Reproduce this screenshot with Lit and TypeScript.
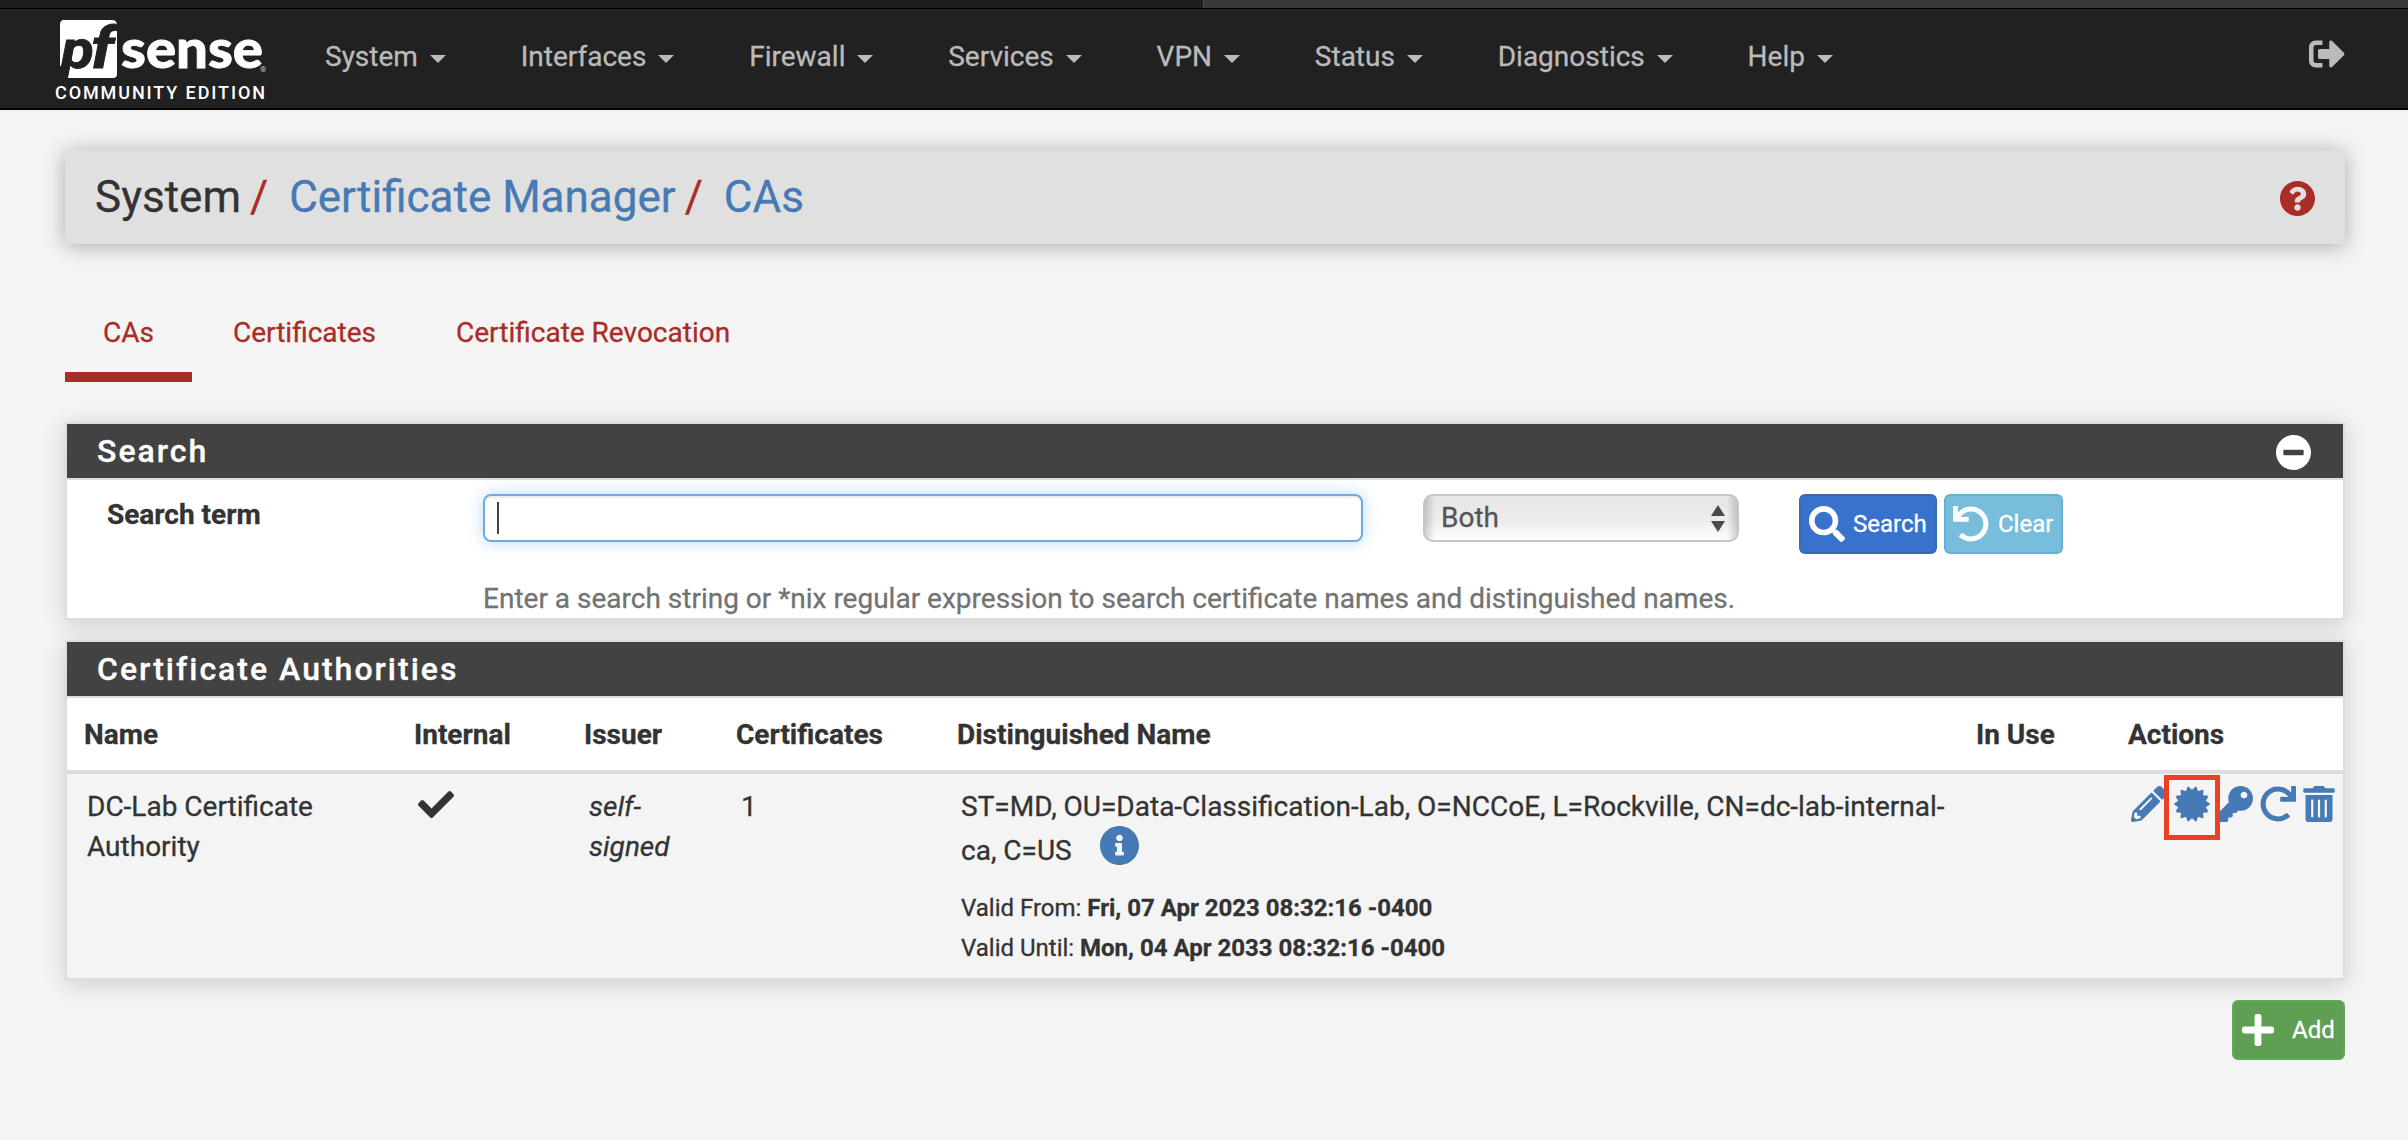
import { LitElement, html, css, svg } from "lit";
import { customElement, property } from "lit/decorators.js";

const ICONS: Record<string, { box: string; d: string }> = {
  signOut: {
    box: "0 0 512 512",
    d: "M497 273L329 441c-15 15-41 4.5-41-17v-96H152c-13.3 0-24-10.7-24-24v-96c0-13.3 10.7-24 24-24h136V88c0-21.4 25.9-32 41-17l168 168c9.3 9.4 9.3 24.6 0 34zM192 436v-40c0-6.6-5.4-12-12-12H96c-17.7 0-32-14.3-32-32V160c0-17.7 14.3-32 32-32h84c6.6 0 12-5.4 12-12V76c0-6.6-5.4-12-12-12H96c-53 0-96 43-96 96v192c0 53 43 96 96 96h84c6.6 0 12-5.4 12-12z",
  },
  question: {
    box: "8 8 496 496",
    d: "M504 256c0 136.997-111.043 248-248 248S8 392.997 8 256C8 119.083 119.043 8 256 8s248 111.083 248 248zM262.655 90c-54.497 0-89.255 22.957-116.549 63.758-3.536 5.286-2.353 12.415 2.715 16.258l34.699 26.31c5.205 3.947 12.621 3.008 16.665-2.122 17.864-22.658 30.113-35.797 57.303-35.797 20.429 0 45.698 13.148 45.698 32.958 0 14.976-12.363 22.667-32.534 33.976C247.128 238.528 216 254.941 216 296v4c0 6.627 5.373 12 12 12h56c6.627 0 12-5.373 12-12v-1.333c0-28.462 83.186-29.647 83.186-106.667 0-58.002-60.165-102-116.531-102zM256 338c-25.365 0-46 20.635-46 46 0 25.364 20.635 46 46 46s46-20.636 46-46c0-25.365-20.635-46-46-46z",
  },
  minus: {
    box: "8 8 496 496",
    d: "M256 8C119 8 8 119 8 256s111 248 248 248 248-111 248-248S393 8 256 8zM124 296c-6.6 0-12-5.4-12-12v-56c0-6.6 5.4-12 12-12h264c6.6 0 12 5.4 12 12v56c0 6.6-5.4 12-12 12H124z",
  },
  info: {
    box: "8 8 496 496",
    d: "M256 8C119.043 8 8 119.083 8 256c0 136.997 111.043 248 248 248s248-111.003 248-248C504 119.083 392.957 8 256 8zm0 110c23.196 0 42 18.804 42 42s-18.804 42-42 42-42-18.804-42-42 18.804-42 42-42zm56 254c0 6.627-5.373 12-12 12h-88c-6.627 0-12-5.373-12-12v-24c0-6.627 5.373-12 12-12h12v-64h-12c-6.627 0-12-5.373-12-12v-24c0-6.627 5.373-12 12-12h64c6.627 0 12 5.373 12 12v100h12c6.627 0 12 5.373 12 12v24z",
  },
  search: {
    box: "0 0 512 512",
    d: "M505 442.7L405.3 343c-4.5-4.5-10.6-7-17-7H372c27.6-35.3 44-79.7 44-128C416 93.1 322.9 0 208 0S0 93.1 0 208s93.1 208 208 208c48.3 0 92.7-16.4 128-44v16.3c0 6.4 2.5 12.5 7 17l99.7 99.7c9.4 9.4 24.6 9.4 33.9 0l28.3-28.3c9.4-9.4 9.4-24.6.1-34zM208 336c-70.7 0-128-57.2-128-128 0-70.7 57.2-128 128-128 70.7 0 128 57.2 128 128 0 70.7-57.2 128-128 128z",
  },
  plus: {
    box: "0 32 448 448",
    d: "M416 208H272V64c0-17.67-14.33-32-32-32h-32c-17.67 0-32 14.33-32 32v144H32c-17.67 0-32 14.33-32 32v32c0 17.67 14.33 32 32 32h144v144c0 17.67 14.33 32 32 32h32c17.67 0 32-14.33 32-32V304h144c17.67 0 32-14.33 32-32v-32c0-17.67-14.33-32-32-32z",
  },
  check: {
    box: "0 65 512 382",
    d: "M173.898 439.404l-166.4-166.4c-9.997-9.997-9.997-26.206 0-36.204l36.203-36.204c9.997-9.998 26.207-9.998 36.204 0L192 312.69 432.095 72.596c9.997-9.997 26.207-9.997 36.204 0l36.203 36.204c9.997 9.997 9.997 26.206 0 36.204l-294.4 294.401c-9.998 9.997-26.207 9.997-36.204-.001z",
  },
  redo: {
    box: "0 0 512 512",
    d: "M500.33 0h-47.41a12 12 0 0 0-12 12.57l4 82.76A247.42 247.42 0 0 0 256 8C119.34 8 7.9 119.53 8 256.19 8.1 393.07 119.1 504 256 504a247.1 247.1 0 0 0 166.18-63.91 12 12 0 0 0 .48-17.43l-34-34a12 12 0 0 0-16.38-.55A176 176 0 1 1 402.1 157.8l-101.53-4.87a12 12 0 0 0-12.57 12v47.41a12 12 0 0 0 12 12h200.33a12 12 0 0 0 12-12V12a12 12 0 0 0-12-12z",
  },
  pencil: {
    box: "0 0 512 512",
    d: "M497.9 142.1l-46.1 46.1c-4.7 4.7-12.3 4.7-17 0l-111-111c-4.7-4.7-4.7-12.3 0-17l46.1-46.1c18.7-18.7 49.1-18.7 67.9 0l60.1 60.1c18.8 18.7 18.8 49.1 0 67.9zM284.2 99.8L21.6 362.4.4 483.9c-2.9 16.4 11.4 30.6 27.8 27.8l121.5-21.3 262.6-262.6c4.7-4.7 4.7-12.3 0-17l-111-111c-4.8-4.7-12.4-4.7-17.1 0zM124.1 339.9c-5.5-5.5-5.5-14.3 0-19.8l154-154c5.5-5.5 14.3-5.5 19.8 0s5.5 14.3 0 19.8l-154 154c-5.5 5.5-14.3 5.5-19.8 0zM88 424h48v36.3l-64.5 11.3-31.1-31.1L51.7 376H88v48z",
  },
  key: {
    box: "0 0 512 512",
    d: "M512 176.001C512 273.203 433.202 352 336 352c-11.22 0-22.19-1.062-32.827-3.069l-24.012 27.014A23.999 23.999 0 0 1 261.223 384H224v40c0 13.255-10.745 24-24 24h-40v40c0 13.255-10.745 24-24 24H24c-13.255 0-24-10.745-24-24v-78.059c0-6.365 2.529-12.47 7.029-16.971l161.802-161.802C163.108 213.814 160 195.271 160 176 160 78.798 238.797.001 335.999 0 433.488-.001 512 78.511 512 176.001zM336 128c0 26.51 21.49 48 48 48s48-21.49 48-48-21.49-48-48-48-48 21.49-48 48z",
  },
  trash: {
    box: "0 0 448 512",
    d: "M32 464a48 48 0 0 0 48 48h288a48 48 0 0 0 48-48V128H32zm272-256a16 16 0 0 1 32 0v224a16 16 0 0 1-32 0zm-96 0a16 16 0 0 1 32 0v224a16 16 0 0 1-32 0zm-96 0a16 16 0 0 1 32 0v224a16 16 0 0 1-32 0zM432 32H312l-9.4-18.7A24 24 0 0 0 281.1 0H166.8a23.72 23.72 0 0 0-21.4 13.3L136 32H16A16 16 0 0 0 0 48v32a16 16 0 0 0 16 16h416a16 16 0 0 0 16-16V48a16 16 0 0 0-16-16z",
  },
  seal: { box: "-256 -256 512 512", d: sealPath(14, 244, 186) },
};

/* Spiked disc: tips on the outer radius, notches on the inner one. */
function sealPath(tips: number, outer: number, inner: number): string {
  const points: string[] = [];
  for (let i = 0; i < tips * 2; i++) {
    const r = i % 2 === 0 ? outer : inner;
    const a = (Math.PI * i) / tips;
    points.push(`${(r * Math.cos(a)).toFixed(1)} ${(r * Math.sin(a)).toFixed(1)}`);
  }
  return `M${points.join("L")}Z`;
}

@customElement("fa-icon")
class FaIcon extends LitElement {
  @property() name = "";

  static styles = css`
    :host {
      display: block;
      flex: none;
    }
    svg {
      display: block;
      width: 100%;
      height: 100%;
      fill: currentColor;
    }
    .rounded {
      stroke: currentColor;
      stroke-width: 22;
      stroke-linejoin: round;
    }
  `;

  render() {
    const icon = ICONS[this.name];
    if (!icon) return html``;
    return html`<svg viewBox=${icon.box}>
      ${svg`<path class=${this.name === "seal" ? "rounded" : ""} d=${icon.d}></path>`}
    </svg>`;
  }
}

@customElement("pf-logo")
class PfLogo extends LitElement {
  static styles = css`
    :host {
      display: block;
      flex: none;
      width: 214px;
      height: 82px;
      -webkit-text-stroke: 0;
    }
    svg {
      display: block;
      overflow: visible;
    }
    .mark {
      fill: #fff;
    }
    .pf {
      fill: #212121;
      stroke: #212121;
      stroke-width: 0.8;
      font: italic 700 53px Roboto, sans-serif;
    }
    .tall {
      font-size: 57px;
    }
    .sense {
      fill: #fff;
      stroke: #fff;
      stroke-width: 0.8;
      font: 900 53px Lato, sans-serif;
    }
    .reg {
      fill: #ccc;
      font: 8px Roboto, sans-serif;
    }
    .edition {
      fill: #fff;
      font: 500 18px Roboto, sans-serif;
    }
  `;

  render() {
    return html`<svg width="214" height="86" viewBox="0 0 214 86">
      <path class="mark" d="M10 4H58a5 5 0 0 1 4 4V58a4 4 0 0 1-4 4H11L14 52L5 50V8a4 4 0 0 1 5-4z"></path>
      <text class="pf" x="6" y="52" textLength="33" lengthAdjust="spacingAndGlyphs">p</text>
      <text class="pf tall" x="36" y="52" textLength="23" lengthAdjust="spacingAndGlyphs">f</text>
      <text class="sense" x="66" y="52" textLength="142" lengthAdjust="spacingAndGlyphs">sense</text>
      <text class="reg" x="205" y="56">®</text>
      <text class="edition" x="0" y="83" textLength="210">COMMUNITY EDITION</text>
    </svg>`;
  }
}

const MENU = ["System", "Interfaces", "Firewall", "Services", "VPN", "Status", "Diagnostics", "Help"];
const TABS = ["CAs", "Certificates", "Certificate Revocation"];
const HEADS = ["Name", "Internal", "Issuer", "Certificates", "Distinguished Name", "In Use", "Actions"];

@customElement("app-root")
class AppRoot extends LitElement {
  static styles = css`
    :host {
      display: block;
      box-sizing: border-box;
      height: 1140px;
      background: #f4f4f4;
      color: #333;
      font: 28px/40px Roboto, sans-serif;
      -webkit-text-stroke: 0.3px currentColor;
    }
    *,
    *::before {
      box-sizing: border-box;
    }
    .strip {
      display: grid;
      grid-template-columns: 1203px 1fr;
      height: 9px;
      border-bottom: 1px solid #000;
      background: #1e1e1e;
    }
    .strip-tab {
      grid-column: 2;
      background: #39393b;
      border-left: 1px solid #4d4d4f;
    }
    nav {
      display: flex;
      height: 101px;
      padding: 7px 63px 0 55px;
      background: #212121;
      border-bottom: 2px solid #000;
      color: #bbb;
    }
    .menu {
      display: flex;
      gap: 74.8px;
      padding: 21px 0 0 56px;
      height: 61px;
    }
    .menu-item {
      display: flex;
      align-items: center;
      gap: 12px;
    }
    .caret {
      border: 8px solid transparent;
      border-top-color: currentColor;
      border-bottom: 0;
      margin-top: 3px;
    }
    .logout {
      width: 36px;
      height: 36px;
      margin: 20px 0 0 auto;
    }
    main {
      padding: 40px 63px 0 65px;
    }
    .crumbs {
      display: flex;
      align-items: center;
      height: 94px;
      padding: 0 30px;
      background: #e0e0e0;
      box-shadow: 0 2px 20px rgba(0, 0, 0, 0.3);
      font-size: 44px;
    }
    .slash {
      color: #a92d26;
      margin: 0 21px 0 9px;
    }
    .link {
      color: #457ab4;
    }
    .help {
      width: 35px;
      height: 35px;
      margin: 2px 0 0 auto;
      color: #a92d26;
    }
    .tabs {
      display: flex;
      height: 138px;
      color: #a92d26;
    }
    .tab {
      padding: 69px 39px 0 41px;
    }
    .tab.on {
      padding: 69px 38px 0 38px;
      border-bottom: 10px solid #a92d26;
    }
    .panel {
      background: #fff;
      border: 2px solid #ddd;
      box-shadow: 0 4px 22px rgba(0, 0, 0, 0.16);
    }
    .search-panel {
      margin-top: 40px;
      height: 198px;
    }
    .table-panel {
      margin-top: 20px;
      height: 340px;
    }
    .panel-head {
      display: flex;
      align-items: center;
      justify-content: space-between;
      height: 56px;
      padding: 0 32px 1px 30px;
      border-bottom: 2px solid #ddd;
      background: #424242;
      color: #fff;
      font-size: 32px;
      font-weight: 500;
      letter-spacing: 2px;
    }
    .collapse {
      width: 35px;
      height: 35px;
      margin-top: 3px;
    }
    .form {
      display: grid;
      grid-template-columns: 376px 940px 376px 1fr;
      padding: 14px 0 0 40px;
    }
    .label {
      font-weight: 700;
      padding-top: 1px;
    }
    .input {
      width: 880px;
      height: 48px;
      padding: 8px 12px;
      border: 2px solid #72a9e3;
      border-radius: 8px;
      box-shadow: inset 0 2px 2px rgba(0, 0, 0, 0.08), 0 0 16px rgba(102, 175, 233, 0.45);
    }
    .text-cursor {
      width: 2px;
      height: 32px;
      margin-top: -2px;
      background: #444;
    }
    .select {
      display: flex;
      align-items: center;
      justify-content: space-between;
      width: 316px;
      height: 48px;
      padding: 0 12px 0 16px;
      border: 2px solid #c6c6c6;
      border-radius: 10px;
      background: linear-gradient(90deg, rgba(0, 0, 0, 0.16), transparent 10px, transparent calc(100% - 10px), rgba(0, 0, 0, 0.16)),
        linear-gradient(#e6e6e6, #ececec 55%, #fdfdfd);
      color: #555;
    }
    .arrows {
      display: grid;
      gap: 5px;
    }
    .up,
    .down {
      border: 7px solid transparent;
    }
    .up {
      border-top: 0;
      border-bottom: 11px solid #4a4a4a;
    }
    .down {
      border-bottom: 0;
      border-top: 11px solid #4a4a4a;
    }
    .buttons {
      display: flex;
      gap: 7px;
    }
    .btn {
      display: flex;
      align-items: center;
      height: 60px;
      border: 2px solid;
      border-radius: 6px;
      color: #fff;
      font-size: 24px;
    }
    .btn fa-icon {
      width: 36px;
      height: 36px;
    }
    .find {
      width: 138px;
      padding-left: 8px;
      gap: 8px;
      background: #3872cd;
      border-color: #3a6aaa;
    }
    .clear {
      width: 119px;
      padding-left: 7px;
      gap: 9px;
      background: #78bddc;
      border-color: #63b2d6;
    }
    .clear fa-icon {
      transform: scaleX(-1);
    }
    .hint {
      grid-column: 2 / 5;
      padding-top: 25px;
      color: #737373;
    }
    .row {
      display: grid;
      grid-template-columns: 330px 170px 152px 221px 1019px 152px 1fr;
    }
    .head {
      height: 76px;
      padding: 17px 0 0 17px;
      border-bottom: 4px solid #ddd;
      font-weight: 700;
    }
    .body {
      height: 204px;
      padding: 13px 0 0 20px;
      background: #f4f4f4;
    }
    .name {
      width: 240px;
    }
    .check {
      width: 36px;
      height: 27px;
      margin: 4px 0 0 1px;
    }
    .issuer {
      font-style: italic;
      width: 92px;
      padding-left: 2px;
    }
    .count {
      padding-left: 2px;
    }
    .dn {
      line-height: 44px;
      margin-top: -2px;
      width: 1000px;
      padding-left: 1px;
    }
    .dn-last {
      display: flex;
      gap: 28px;
    }
    .info {
      width: 39px;
      height: 39px;
      color: #457ab4;
      margin-top: -3px;
    }
    .dates {
      padding-top: 15px;
      font-size: 24px;
      line-height: 40px;
    }
    .actions {
      display: flex;
      color: #457ab4;
      gap: 7px;
      margin-top: -1px;
    }
    .actions fa-icon {
      width: 36px;
      height: 36px;
    }
    .actions .trash {
      width: 32px;
    }
    .marked {
      position: relative;
    }
    .marked::before {
      content: "";
      position: absolute;
      left: -10px;
      top: -11px;
      width: 56px;
      height: 65px;
      border: 5px solid #ec4025;
    }
    .footer {
      display: flex;
      justify-content: flex-end;
      padding-top: 20px;
    }
    .add {
      width: 113px;
      padding-left: 8px;
      gap: 18px;
      background: #5f9f53;
      border-color: #5caa55;
    }
    .add fa-icon {
      width: 32px;
      height: 32px;
    }
  `;

  render() {
    return html`
      <div class="strip"><div class="strip-tab"></div></div>
      <nav>
        <pf-logo></pf-logo>
        <div class="menu">
          ${MENU.map((m) => html`<span class="menu-item">${m}<i class="caret"></i></span>`)}
        </div>
        <fa-icon class="logout" name="signOut"></fa-icon>
      </nav>
      <main>
        <header class="crumbs">
          <span>System</span><span class="slash">/</span>
          <span class="link">Certificate Manager</span><span class="slash">/</span>
          <span class="link">CAs</span>
          <fa-icon class="help" name="question"></fa-icon>
        </header>
        <div class="tabs">
          ${TABS.map((t, i) => html`<span class="tab ${i === 0 ? "on" : ""}">${t}</span>`)}
        </div>
        <section class="panel search-panel">
          <div class="panel-head">Search<fa-icon class="collapse" name="minus"></fa-icon></div>
          <div class="form">
            <span class="label">Search term</span>
            <div class="input"><div class="text-cursor"></div></div>
            <div class="select">Both<span class="arrows"><i class="up"></i><i class="down"></i></span></div>
            <div class="buttons">
              <span class="btn find"><fa-icon name="search"></fa-icon>Search</span>
              <span class="btn clear"><fa-icon name="redo"></fa-icon>Clear</span>
            </div>
            <div class="hint">
              Enter a search string or *nix regular expression to search certificate names and distinguished names.
            </div>
          </div>
        </section>
        <section class="panel table-panel">
          <div class="panel-head">Certificate Authorities</div>
          <div class="row head">${HEADS.map((h) => html`<span>${h}</span>`)}</div>
          <div class="row body">
            <div class="name">DC-Lab Certificate Authority</div>
            <div><fa-icon class="check" name="check"></fa-icon></div>
            <div class="issuer">self-signed</div>
            <div class="count">1</div>
            <div class="dn">
              <div>ST=MD, OU=Data-Classification-Lab, O=NCCoE, L=Rockville, CN=dc-lab-internal-</div>
              <div class="dn-last">ca, C=US<fa-icon class="info" name="info"></fa-icon></div>
              <div class="dates">
                <div>Valid From: <b>Fri, 07 Apr 2023 08:32:16 -0400</b></div>
                <div>Valid Until: <b>Mon, 04 Apr 2033 08:32:16 -0400</b></div>
              </div>
            </div>
            <div></div>
            <div class="actions">
              <fa-icon name="pencil"></fa-icon>
              <fa-icon class="marked" name="seal"></fa-icon>
              <fa-icon name="key"></fa-icon>
              <fa-icon name="redo"></fa-icon>
              <fa-icon class="trash" name="trash"></fa-icon>
            </div>
          </div>
        </section>
        <div class="footer">
          <span class="btn add"><fa-icon name="plus"></fa-icon>Add</span>
        </div>
      </main>
    `;
  }
}
